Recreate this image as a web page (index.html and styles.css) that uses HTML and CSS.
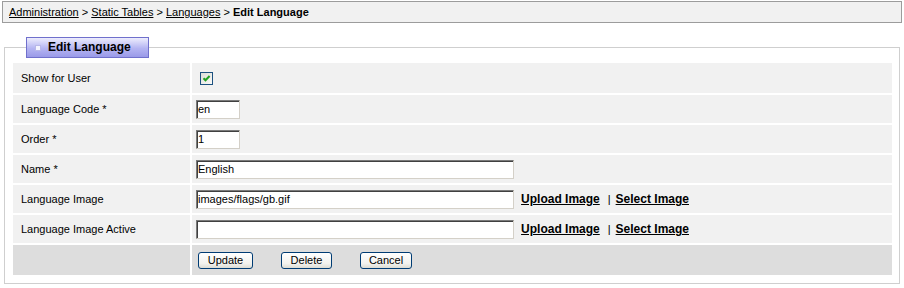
FILE: index.html
```html
<!DOCTYPE html>
<html lang="en">
<head>
    <meta charset="UTF-8">
    <title>Edit Language</title>
    <link rel="stylesheet" href="styles.css">
</head>
<body>
    <div class="page">
        <div class="breadcrumb">
            <a href="#">Administration</a> &gt; <a href="#">Static Tables</a> &gt; <a href="#">Languages</a> &gt; <b>Edit Language</b>
        </div>

        <fieldset class="panel">
            <legend class="panel-title"><span class="bullet"></span>Edit Language</legend>

            <table class="form-table">
                <tr class="row-tall">
                    <td class="label">Show for User</td>
                    <td class="value">
                        <span class="checkbox">
                            <svg width="11" height="11" viewBox="0 0 11 11"><path d="M2.5 5.2 L4.5 7.3 L8.6 3" fill="none" stroke="#21a121" stroke-width="2"/></svg>
                        </span>
                    </td>
                </tr>
                <tr>
                    <td class="label">Language Code *</td>
                    <td class="value"><input type="text" class="input input-short" value="en"></td>
                </tr>
                <tr>
                    <td class="label">Order *</td>
                    <td class="value"><input type="text" class="input input-short" value="1"></td>
                </tr>
                <tr>
                    <td class="label">Name *</td>
                    <td class="value"><input type="text" class="input input-long" value="English"></td>
                </tr>
                <tr>
                    <td class="label">Language Image</td>
                    <td class="value">
                        <input type="text" class="input input-long" value="images/flags/gb.gif">
                        <a href="#" class="action">Upload Image</a><span class="sep">|</span><a href="#" class="action">Select Image</a>
                    </td>
                </tr>
                <tr>
                    <td class="label">Language Image Active</td>
                    <td class="value">
                        <input type="text" class="input input-long" value="">
                        <a href="#" class="action">Upload Image</a><span class="sep">|</span><a href="#" class="action">Select Image</a>
                    </td>
                </tr>
                <tr class="row-tall row-buttons">
                    <td class="label"></td>
                    <td class="value">
                        <div class="buttons">
                            <button class="button btn-update">Update</button>
                            <button class="button btn-delete">Delete</button>
                            <button class="button btn-cancel">Cancel</button>
                        </div>
                    </td>
                </tr>
            </table>
        </fieldset>
    </div>
</body>
</html>
```

FILE: styles.css
```css
body {
    margin: 0;
    font-family: Tahoma, "Liberation Sans", Arial, sans-serif;
    font-size: 11px;
    color: #000;
    background: #fff;
}

.page {
    padding: 1px 2px;
}

a {
    color: #000;
}

.breadcrumb {
    height: 20px;
    line-height: 20px;
    padding: 0 6px;
    border: 1px solid #9c9c9c;
    background-color: #f1f1f1;
}

/* Panel with the tab-like title */
.panel {
    margin: 14px 2px 0 2px;
    padding: 3px 5px 6px 6px;
    border: 1px solid #cfcfcf;
}

.panel-title {
    margin-left: 15px;
    padding: 0 0 0 8px;
    width: 113px;
    height: 19px;
    line-height: 19px;
    border: 1px solid #7070cc;
    background: linear-gradient(#ededfd, #b4b4f2 55%, #9a9ae8);
    font-family: "Liberation Sans", Arial, sans-serif;
    font-size: 12px;
    font-weight: bold;
    display: flex;
    align-items: center;
}

.bullet {
    width: 4px;
    height: 4px;
    margin-right: 7px;
    border: 1px solid #b8b8e8;
    background-color: #f4f4ff;
}

/* Form rows */
.form-table {
    width: 100%;
    border-collapse: separate;
    border-spacing: 2px;
}

.form-table td {
    height: 28px;
    padding: 0;
    background-color: #f1f1f1;
    vertical-align: middle;
}

.form-table .row-tall td {
    height: 30px;
}

.form-table .row-buttons td {
    background-color: #dddddd;
}

.label {
    width: 169px;
    padding-left: 8px !important;
}

.value {
    padding-left: 4px !important;
    white-space: nowrap;
}

.checkbox {
    display: inline-flex;
    align-items: center;
    justify-content: center;
    width: 11px;
    height: 11px;
    margin: 1px 0 0 4px;
    border: 1px solid #1c5180;
    background: linear-gradient(135deg, #dcdcd7, #fafaf8);
    vertical-align: middle;
}

.input {
    box-sizing: border-box;
    height: 19px;
    padding: 0 1px;
    margin: 0;
    border: 1px solid;
    border-color: #7a7a7a #d4d0c8 #d4d0c8 #7a7a7a;
    box-shadow: inset 1px 1px 0 #404040;
    font-family: Tahoma, "Liberation Sans", Arial, sans-serif;
    font-size: 11px;
    color: #000;
    background: #fff;
    vertical-align: middle;
}

.input-short {
    width: 44px;
}

.input-long {
    width: 318px;
}

.action {
    margin-left: 4px;
    font-family: "Liberation Sans", Arial, sans-serif;
    font-size: 12px;
    font-weight: bold;
    vertical-align: middle;
}

.sep {
    margin: 0 1px 0 8px;
    vertical-align: middle;
}

.buttons {
    display: flex;
    gap: 28px;
    padding-left: 2px;
}

.button {
    height: 17px;
    padding: 0;
    border: 1px solid #003c74;
    border-radius: 3px;
    background: linear-gradient(#ffffff, #f2f2ee 70%, #dcdcd4);
    font-family: Tahoma, "Liberation Sans", Arial, sans-serif;
    font-size: 11px;
    color: #000;
    line-height: 15px;
}

.btn-update {
    width: 55px;
}

.btn-delete {
    width: 51px;
}

.btn-cancel {
    width: 52px;
}
```
